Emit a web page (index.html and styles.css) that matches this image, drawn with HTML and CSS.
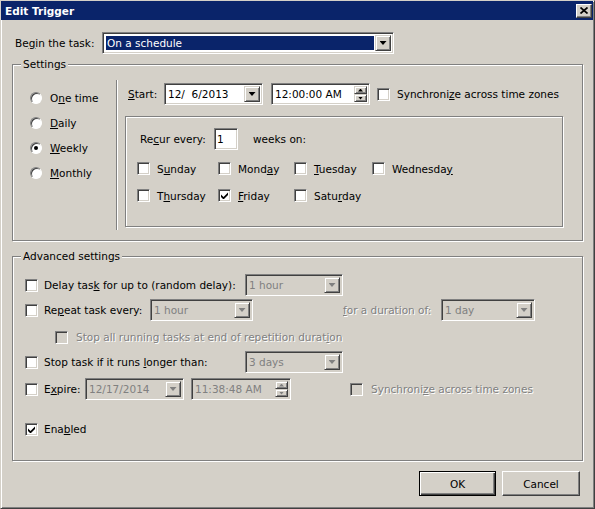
FILE: index.html
```html
<!DOCTYPE html>
<html lang="en">
<head>
    <meta charset="UTF-8">
    <title>Edit Trigger</title>
    <link rel="stylesheet" href="styles.css">
</head>
<body>

<div class="window">
    <div class="titlebar">
        <span class="title">Edit Trigger</span>
        <span class="close-btn">
            <svg width="8" height="7" viewBox="0 0 8 7"><path d="M0.5 0.5l7 6M7.5 0.5l-7 6" stroke="#000" stroke-width="1.7"/></svg>
        </span>
    </div>

    <div class="content">
        <div class="begin-row">
            <span class="begin-label">Be<u>g</u>in the task:</span>
            <div class="combo combo-begin">
                <div class="combo-value selected">On a schedule</div>
                <div class="combo-btn"></div>
            </div>
        </div>

        <!-- Settings -->
        <div class="group settings">
            <span class="group-label">Settings</span>

            <div class="schedule-types">
                <div class="radio-row"><span class="radio"></span><span>O<u>n</u>e time</span></div>
                <div class="radio-row"><span class="radio"></span><span><u>D</u>aily</span></div>
                <div class="radio-row"><span class="radio checked"></span><span><u>W</u>eekly</span></div>
                <div class="radio-row"><span class="radio"></span><span><u>M</u>onthly</span></div>
            </div>

            <div class="separator"></div>

            <div class="schedule-detail">
                <div class="start-row">
                    <span class="start-label"><u>S</u>tart:</span>
                    <div class="combo combo-date">
                        <div class="combo-value">12/&nbsp;&nbsp;6/2013</div>
                        <div class="combo-btn"></div>
                    </div>
                    <div class="combo spin-field">
                        <div class="combo-value">12:00:00 AM</div>
                        <div class="spin">
                            <div class="spin-btn up"></div>
                            <div class="spin-btn down"></div>
                        </div>
                    </div>
                    <span class="checkbox"></span>
                    <span class="cb-text">Synchroni<u>z</u>e across time zones</span>
                </div>

                <div class="group recur">
                    <div class="recur-row">
                        <span class="recur-label">Re<u>c</u>ur every:</span>
                        <div class="text-input">1</div>
                        <span class="weeks-on">weeks on:</span>
                    </div>
                    <div class="days">
                        <div class="day"><span class="checkbox"></span><span>S<u>u</u>nday</span></div>
                        <div class="day"><span class="checkbox"></span><span>Mond<u>a</u>y</span></div>
                        <div class="day"><span class="checkbox"></span><span><u>T</u>uesday</span></div>
                        <div class="day"><span class="checkbox"></span><span>Wednesda<u>y</u></span></div>
                        <div class="day"><span class="checkbox"></span><span>T<u>h</u>ursday</span></div>
                        <div class="day">
                            <span class="checkbox">
                                <svg width="7" height="7" viewBox="0 0 7 7"><path d="M0 2.5l2.5 2.5L7 0.5v2.5L2.5 7.5 0 5z"/></svg>
                            </span>
                            <span><u>F</u>riday</span>
                        </div>
                        <div class="day"><span class="checkbox"></span><span>Satu<u>r</u>day</span></div>
                    </div>
                </div>
            </div>
        </div>

        <!-- Advanced settings -->
        <div class="group advanced">
            <span class="group-label">Advanced settings</span>

            <div class="adv-row">
                <span class="checkbox"></span>
                <span class="adv-label lbl-wide">Delay tas<u>k</u> for up to (random delay):</span>
                <div class="combo disabled combo-short">
                    <div class="combo-value">1 hour</div>
                    <div class="combo-btn"></div>
                </div>
            </div>

            <div class="adv-row row-repeat">
                <span class="checkbox"></span>
                <span class="adv-label lbl-repeat">Re<u>p</u>eat task every:</span>
                <div class="combo disabled combo-repeat">
                    <div class="combo-value">1 hour</div>
                    <div class="combo-btn"></div>
                </div>
                <span class="duration-label dim"><u>f</u>or a duration of:</span>
                <div class="combo disabled combo-duration">
                    <div class="combo-value">1 day</div>
                    <div class="combo-btn"></div>
                </div>
            </div>

            <div class="adv-row row-stop-all">
                <span class="checkbox disabled indent"></span>
                <span class="dim">Stop all running tasks at end of repetition durat<u>i</u>on</span>
            </div>

            <div class="adv-row row-stop">
                <span class="checkbox"></span>
                <span class="adv-label lbl-wide">Stop task if it runs <u>l</u>onger than:</span>
                <div class="combo disabled combo-short">
                    <div class="combo-value">3 days</div>
                    <div class="combo-btn"></div>
                </div>
            </div>

            <div class="adv-row row-expire">
                <span class="checkbox"></span>
                <span class="adv-label lbl-expire">E<u>x</u>pire:</span>
                <div class="combo disabled combo-date">
                    <div class="combo-value">12/17/2014</div>
                    <div class="combo-btn"></div>
                </div>
                <div class="combo disabled spin-field expire-time">
                    <div class="combo-value">11:38:48 AM</div>
                    <div class="spin">
                        <div class="spin-btn up"></div>
                        <div class="spin-btn down"></div>
                    </div>
                </div>
                <span class="checkbox disabled sync-expire"></span>
                <span class="dim">Synchroni<u>z</u>e across time zones</span>
            </div>

            <div class="adv-row row-enabled">
                <span class="checkbox">
                    <svg width="7" height="7" viewBox="0 0 7 7"><path d="M0 2.5l2.5 2.5L7 0.5v2.5L2.5 7.5 0 5z"/></svg>
                </span>
                <span class="adv-label">Ena<u>b</u>led</span>
            </div>
        </div>

        <div class="buttons">
            <button class="btn btn-default">OK</button>
            <button class="btn btn-cancel">Cancel</button>
        </div>
    </div>
</div>

</body>
</html>
```

FILE: styles.css
```css
* {
    margin: 0;
    padding: 0;
    box-sizing: border-box;
}
body {
    font-family: "DejaVu Sans", Tahoma, sans-serif;
    font-size: 10.5px;
    color: #000;
    background: #d4d0c8;
}
u {
    text-decoration: underline;
    text-underline-offset: 1px;
}

/* window frame */
.window {
    width: 595px;
    height: 509px;
    background: #d4d0c8;
    border: 1px solid;
    border-color: #d4d0c8 #404040 #404040 #d4d0c8;
    box-shadow: inset 1px 1px #fff, inset -1px -1px #808080;
}
.titlebar {
    height: 19px;
    margin-right: 1px;
    padding: 0 1px 0 4px;
    display: flex;
    align-items: center;
    justify-content: space-between;
    background: #0a246a;
    color: #fff;
    font-weight: bold;
}
.close-btn {
    width: 16px;
    height: 14px;
    display: flex;
    align-items: center;
    justify-content: center;
    background: #d4d0c8;
    border: 1px solid;
    border-color: #fff #404040 #404040 #fff;
    box-shadow: inset -1px -1px #808080;
}

.content {
    padding: 12px 14px 0 11px;
}

/* begin row */
.begin-row {
    display: flex;
    align-items: center;
    height: 22px;
}
.begin-label {
    width: 90px;
    padding-left: 3px;
}

/* sunken fields */
.combo, .text-input {
    display: flex;
    height: 22px;
    padding: 2px;
    background: #fff;
    border: 1px solid;
    border-color: #808080 #fff #fff #808080;
    box-shadow: inset 1px 1px #404040, inset -1px -1px #d4d0c8;
}
.combo-value {
    flex: 1;
    padding-left: 1px;
    line-height: 16px;
    white-space: nowrap;
    overflow: hidden;
}
.combo-value.selected {
    margin: 1px;
    background: #0a246a;
    color: #fff;
    line-height: 14px;
}
.combo-btn {
    width: 16px;
    display: flex;
    align-items: center;
    justify-content: center;
    background: #d4d0c8;
    border: 1px solid;
    border-color: #d4d0c8 #404040 #404040 #d4d0c8;
    box-shadow: inset 1px 1px #fff, inset -1px -1px #808080;
}
.combo-btn::after {
    content: "";
    width: 7px;
    height: 4px;
    background: #000;
    clip-path: polygon(0 0, 100% 0, 50% 100%);
}
.combo.disabled {
    background: #d4d0c8;
    color: #808080;
}
.combo.disabled .combo-btn::after {
    background: #808080;
}
.combo-begin {
    width: 292px;
}

.spin {
    width: 13px;
    display: flex;
    flex-direction: column;
}
.spin-btn {
    flex: 1;
    display: flex;
    align-items: center;
    justify-content: center;
    background: #d4d0c8;
    border: 1px solid;
    border-color: #d4d0c8 #404040 #404040 #d4d0c8;
    box-shadow: inset 1px 1px #fff, inset -1px -1px #808080;
}
.spin-btn::after {
    content: "";
    width: 5px;
    height: 3px;
    background: #000;
}
.spin-btn.up::after {
    clip-path: polygon(50% 0, 100% 100%, 0 100%);
}
.spin-btn.down::after {
    clip-path: polygon(0 0, 100% 0, 50% 100%);
}
.combo.disabled .spin-btn::after {
    background: #808080;
}

/* check boxes and radios */
.checkbox {
    width: 13px;
    height: 13px;
    flex-shrink: 0;
    display: flex;
    align-items: center;
    justify-content: center;
    background: #fff;
    border: 1px solid;
    border-color: #808080 #fff #fff #808080;
    box-shadow: inset 1px 1px #404040, inset -1px -1px #d4d0c8;
}
.checkbox.disabled {
    background: #d4d0c8;
}
.radio {
    position: relative;
    width: 12px;
    height: 12px;
    flex-shrink: 0;
    border-radius: 50%;
    background: #fff;
    border: 1px solid;
    border-color: #808080 #fff #fff #808080;
    box-shadow: inset 1px 1px #404040;
}
.radio.checked::after {
    content: "";
    position: absolute;
    left: 3px;
    top: 3px;
    width: 4px;
    height: 4px;
    border-radius: 50%;
    background: #000;
}
.dim {
    color: #808080;
    text-shadow: 1px 1px #fff;
}

/* group boxes */
.group {
    position: relative;
    border: 1px solid #808080;
    box-shadow: inset 1px 1px #fff, 1px 1px #fff;
}
.group-label {
    position: absolute;
    top: -7px;
    left: 8px;
    padding: 0 2px;
    line-height: 12px;
    background: #d4d0c8;
}

.settings {
    margin-top: 10px;
    width: 571px;
    height: 177px;
    display: flex;
    align-items: flex-start;
}
.schedule-types {
    width: 103px;
    padding: 20px 0 0 17px;
}
.radio-row {
    display: flex;
    align-items: center;
    gap: 8px;
    height: 25px;
}
.separator {
    width: 2px;
    height: 150px;
    margin-top: 15px;
    border-left: 1px solid #808080;
    border-right: 1px solid #fff;
}
.schedule-detail {
    padding: 18px 0 0 7px;
}
.start-row {
    display: flex;
    align-items: center;
    height: 22px;
    padding-left: 3px;
}
.start-label {
    width: 36px;
}
.combo-date {
    width: 99px;
    margin-right: 7px;
}
.start-row .combo-date {
    margin-right: 8px;
}
.spin-field {
    width: 99px;
    margin-right: 7px;
}
.cb-text {
    margin-left: 7px;
}

.recur {
    margin-top: 11px;
    width: 438px;
    height: 111px;
    padding: 11px 0 0 11px;
}
.recur-row {
    display: flex;
    align-items: center;
    height: 22px;
    padding-left: 3px;
}
.recur-label {
    width: 74px;
}
.text-input {
    width: 24px;
    line-height: 16px;
    padding-left: 2px;
}
.weeks-on {
    margin-left: 15px;
}
.days {
    display: grid;
    grid-template-columns: 81px 76px 78px auto;
    row-gap: 14px;
    margin-top: 12px;
}
.day {
    display: flex;
    align-items: center;
    gap: 7px;
    height: 13px;
}

/* advanced settings */
.advanced {
    margin-top: 15px;
    width: 571px;
    height: 205px;
    padding: 17px 0 0 12px;
}
.adv-row {
    display: flex;
    align-items: center;
    height: 22px;
}
.adv-row .checkbox {
    margin-right: 6px;
}
.lbl-wide {
    width: 201px;
}
.lbl-repeat {
    width: 106px;
}
.lbl-expire {
    width: 41px;
}
.combo-short {
    width: 98px;
}
.combo-repeat {
    width: 103px;
}
.duration-label {
    width: 98px;
    margin-left: 90px;
}
.combo-duration {
    width: 94px;
}
.row-repeat {
    margin-top: 3px;
}
.row-stop-all {
    margin-top: 5px;
}
.adv-row .checkbox.indent {
    margin: 0 8px 0 30px;
}
.row-stop {
    margin-top: 3px;
}
.row-expire {
    margin-top: 5px;
}
.expire-time {
    width: 100px;
    margin-right: 0;
}
.adv-row .checkbox.sync-expire {
    margin: 0 8px 0 59px;
}
.row-enabled {
    margin-top: 18px;
}

/* dialog buttons */
.buttons {
    display: flex;
    justify-content: flex-end;
    gap: 6px;
    margin-top: 10px;
}
.btn {
    width: 77px;
    height: 25px;
    font-family: "DejaVu Sans", Tahoma, sans-serif;
    font-size: 10.5px;
    color: #000;
    background: #d4d0c8;
    border: 1px solid;
    border-color: #fff #404040 #404040 #fff;
    box-shadow: inset -1px -1px #808080;
}
.btn-cancel {
    width: 78px;
}
.btn-default {
    border: 1px solid #000;
    box-shadow: inset 1px 1px #fff, inset -1px -1px #404040, inset -2px -2px #808080;
}
```
